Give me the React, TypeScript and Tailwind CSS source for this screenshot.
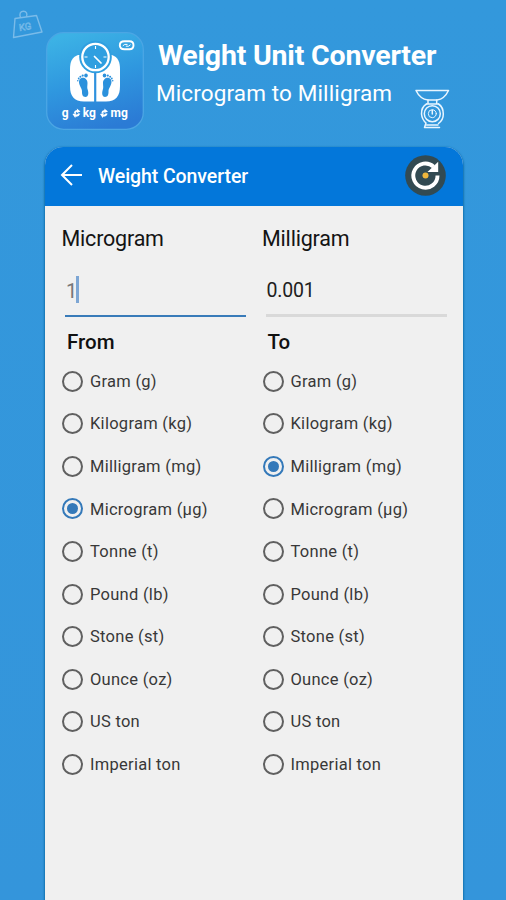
import React, { useState } from "react";

const units = [
  "Gram (g)",
  "Kilogram (kg)",
  "Milligram (mg)",
  "Microgram (µg)",
  "Tonne (t)",
  "Pound (lb)",
  "Stone (st)",
  "Ounce (oz)",
  "US ton",
  "Imperial ton",
];

function KgWeight() {
  return (
    <svg className="absolute left-[12px] top-[9px] opacity-45" width="32" height="31" viewBox="0 0 32 31" fill="none" stroke="#cfe6fa" strokeWidth="1.4" strokeLinejoin="round">
      <path d="M3 9.5 L24.5 6.5 L30 23 L1.5 28.500 Z" />
      <path d="M8.500 8.700 C7 4.500 8.500 2.300 11.500 2.300 C14.500 2.300 15.500 4.500 14.500 7.800" />
      <text x="7.500" y="22" fontSize="9.5" fontFamily="Roboto, sans-serif" strokeWidth="0.6" transform="rotate(-8 7 22)">KG</text>
    </svg>
  );
}

function Foot({ flip = false }: { flip?: boolean }) {
  return (
    <g transform={flip ? "translate(98.500 0) scale(-1 1)" : "translate(0 0)"} fill="#2b91dc">
      <path d="M33.500 47.500 C36 44 41.500 46 41.500 51 C41.500 54 40.800 55.500 41.800 58 C43 62 42 65 39.500 65 C36.500 65 35.800 62 36 59 C36 56 31.500 52 33.500 47.500 Z" />
      <ellipse cx="40" cy="43.400" rx="1.800" ry="2" />
      <circle cx="36.700" cy="43.600" r="1.100" />
      <circle cx="34.400" cy="44.700" r="1" />
      <circle cx="32.700" cy="46.500" r=".9" />
      <circle cx="31.800" cy="48.800" r=".8" />
    </g>
  );
}

function Swap({ x }: { x: number }) {
  return (
    <g transform={`translate(${x} 76)`} fill="#fff">
      <path d="M4.800 0.500 L8.500 3.600 L4.800 5 L5 3.800 Q3.800 4 3.600 5.500 L1.800 4.500 Q2.500 2 5 1.900 Z" />
      <path d="M0.500 6 L4.200 5 L3.700 6.500 Q5.500 7 6.200 5.200 L8.200 5.800 Q7 9 3.700 8.600 L3.200 10 Z" />
    </g>
  );
}

function AppLogo() {
  return (
    <svg className="shrink-0" width="98" height="98" viewBox="0 0 98 98">
      <defs>
        <linearGradient id="logo" x1="0.3" y1="0" x2="0.6" y2="1">
          <stop offset="0" stopColor="#3cb2e5" />
          <stop offset=".5" stopColor="#2f97df" />
          <stop offset="1" stopColor="#2b7bd5" />
        </linearGradient>
      </defs>
      <rect x=".7" y=".7" width="96.600" height="96.600" rx="17" fill="url(#logo)" stroke="#4ba6e4" strokeWidth="1.300" />
      <path d="M32 23 H66 C72 25 74 30 74 37 V54 C74 64 70 69.500 60 69.500 H38 C28 69.500 24 64 24 54 V37 C24 30 26 25 32 23 Z" fill="#fff" />
      <circle cx="49.500" cy="25" r="16.300" fill="#2f9fe0" />
      <circle cx="49.500" cy="25" r="13.200" fill="none" stroke="#fff" strokeWidth="2.300" />
      <path d="M49.500 14v3M49.500 33v3M38.500 25h3M57.500 25h3" stroke="#fff" strokeWidth="1.100" />
      <path d="M48.500 24.500L55 31" stroke="#fff" strokeWidth="1.700" strokeLinecap="round" />
      <path d="M49.200 40.500V70" stroke="#2e91de" strokeWidth="2.200" />
      <Foot />
      <Foot flip />
      <g fill="none" stroke="#fff" strokeWidth="1.900">
        <path d="M82 9.200 H78.500 Q73.800 9.200 73.800 13.300 Q73.800 17.300 78.500 17.300 H83.500 Q87.500 17.300 87.500 13.300 Q87.500 9.200 83.500 9.200 H82" />
        <path d="M76.800 13.800 L78.800 12.400 H81.500 M84.500 12.700 L82.500 14.200 H79.800" strokeWidth="1" />
      </g>
      <g fill="#fff" fontFamily="Roboto, sans-serif" fontWeight="700" fontSize="12">
        <text x="15.800" y="84.500">g</text>
        <text x="36.700" y="84.500">kg</text>
        <text x="64.500" y="84.500">mg</text>
      </g>
      <Swap x={26} />
      <Swap x={53.500} />
    </svg>
  );
}

function KitchenScale() {
  return (
    <svg width="36" height="42" viewBox="0 0 36 42" fill="none" stroke="#e9f6ff" strokeWidth="1.500" strokeLinejoin="round" strokeLinecap="round">
      <path d="M1 1.500 H33.500 Q29.500 10 22 11 H13 Q5 10 1 1.500 Z" />
      <path d="M13 11v3.500M21.700 11v3.500M11.500 15h12" />
      <circle cx="17.300" cy="24.700" r="8" />
      <path d="M11.500 15 Q6.300 18 6.500 25 Q7 30.500 11 34 L9.500 38.500 H24.500 M23.500 34.500 Q28.300 31 28.300 25 Q28.300 18 23.500 15" />
      <circle cx="17.300" cy="24.700" r="4" strokeWidth="1" />
      <path d="M17.300 21.200v3.800" strokeWidth="1.500" />
      <path d="M11.500 36 H23" strokeWidth="1.300" />
    </svg>
  );
}

function RefreshButton() {
  return (
    <svg className="mb-[3px]" width="41" height="41" viewBox="0 0 42 42">
      <circle cx="21" cy="21" r="20.800" fill="#324a52" />
      <path d="M29.300 12 A12.400 12.400 0 1 0 33.300 21" fill="none" stroke="#fff" strokeWidth="4" />
      <path d="M34 7 V17.500 H23 Z" fill="#fff" />
      <circle cx="21" cy="21" r="3.100" fill="#efb63c" />
    </svg>
  );
}

function UnitList({ name, initial }: { name: string; initial: number }) {
  const [selected, setSelected] = useState(initial);
  return (
    <div role="radiogroup" aria-label={name} className="flex flex-col">
      {units.map((unit, i) => (
        <button
          key={unit}
          role="radio"
          aria-checked={selected === i}
          onClick={() => setSelected(i)}
          className="flex h-[42.56px] items-center gap-[7px] text-left text-[16.500px] tracking-[0.27px] text-[#383838]"
        >
          <span className={`flex size-[21px] shrink-0 items-center justify-center rounded-full border-2 ${selected === i ? "border-[#3479b9]" : "border-[#606060]"}`}>
            {selected === i && <span className="size-[11px] rounded-full bg-[#3479b9]" />}
          </span>
          <span className="relative top-px whitespace-nowrap">{unit}</span>
        </button>
      ))}
    </div>
  );
}

export default function App() {
  return (
    <div className="relative flex h-[900px] w-[506px] flex-col overflow-hidden bg-linear-to-b from-[#3398dc] to-[#3495db] font-['Roboto','Liberation_Sans',sans-serif]">
      <KgWeight />
      <header className="flex h-[147px] shrink-0 items-start pl-[46px] pt-[32px]">
        <AppLogo />
        <div className="flex flex-col pl-[13px] pt-[3px] text-white">
          <h1 className="whitespace-nowrap pl-px pt-px text-[28.500px] leading-[39px] font-bold tracking-[-0.2px]">Weight Unit Converter</h1>
          <div className="flex items-start">
            <p className="-ml-px w-[259px] whitespace-nowrap text-[22.500px] leading-[36px] tracking-[0.13px]">Microgram to Milligram</p>
            <div className="pt-[14px]">
              <KitchenScale />
            </div>
          </div>
        </div>
      </header>
      <main className="ml-[44.5px] flex w-[418.500px] flex-1 flex-col overflow-hidden rounded-t-[18px] bg-[#f0f0f0] shadow-[0_1px_2px_1px_#1472b0]">
        <div className="flex h-[59px] shrink-0 items-center bg-[#0377da] pl-[15.5px] pr-[17px]">
          <svg className="mb-[3px]" width="23" height="22" viewBox="0 0 23 22" fill="none" stroke="#fff" strokeWidth="2">
            <path d="M22 11H2M12 1L2 11L12 21" />
          </svg>
          <h2 className="flex-1 whitespace-nowrap pl-[15px] text-[19.500px] font-medium tracking-[-0.08px] text-white">Weight Converter</h2>
          <RefreshButton />
        </div>
        <div className="grid grid-cols-[200.500px_1fr] pl-[17.500px]">
          <section className="flex flex-col">
            <h3 className="h-[64px] pt-[17px] -ml-[0.5px] text-[21.500px] leading-[32px] tracking-[-0.2px] text-[#141414]">Microgram</h3>
            <div className="ml-[3px] flex h-[47px] w-[181px] items-start border-b-2 border-[#397bb9] pt-[1px]">
              <span className="w-[11px] pl-[1px] text-[20px] leading-[40px] text-[#777]">1</span>
              <span className="mt-[5px] h-[27px] w-[3px] bg-[#7da6d4]" />
            </div>
            <h3 className="h-[43px] pl-[5px] pt-[9px] text-[20.500px] leading-[32px] font-medium text-[#111]">From</h3>
            <UnitList name="From" initial={3} />
          </section>
          <section className="flex flex-col">
            <h3 className="h-[64px] pt-[17px] -ml-[0.5px] text-[21.500px] leading-[32px] tracking-[-0.2px] text-[#141414]">Milligram</h3>
            <div className="ml-[3px] h-[47px] w-[181px] border-b-3 border-[#d9d9d9] pt-[1px]">
              <span className="pl-px text-[19.500px] leading-[40px] tracking-[-0.2px] text-[#202020]">0.001</span>
            </div>
            <h3 className="h-[43px] pl-[5px] pt-[9px] text-[20.500px] leading-[32px] font-medium text-[#111]">To</h3>
            <UnitList name="To" initial={2} />
          </section>
        </div>
      </main>
    </div>
  );
}
